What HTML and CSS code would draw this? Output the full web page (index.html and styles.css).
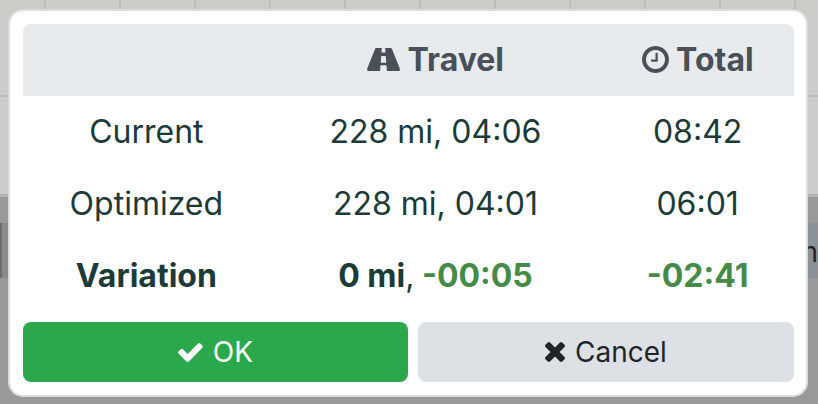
FILE: index.html
```html
<!DOCTYPE html>
<html lang="en">
  <head>
    <meta charset="UTF-8" />
    <meta name="viewport" content="width=device-width, initial-scale=1.0" />
    <title>Optimize route</title>
    <link rel="stylesheet" href="styles.css">
  </head>
  <body>
    <div class="backdrop">
      <div class="map"></div>
      <div class="toolbar">
        <div class="toolbar__left"></div>
        <div class="toolbar__right">m</div>
      </div>
    </div>

    <div class="modal" role="dialog" aria-label="Optimize route">
      <table class="summary">
        <colgroup>
          <col class="col-label">
          <col class="col-travel">
          <col class="col-total">
        </colgroup>
        <thead>
          <tr>
            <td></td>
            <th scope="col">
              <svg class="icon icon--road" viewBox="50 265 1820 1280" aria-hidden="true"><path d="M1111 1062v-4l-24-320q-1-13-11-22.5t-23-9.5h-186q-13 0-23 9.5t-11 22.5l-24 320v4q-1 12 8 20t21 8h244q12 0 21-8t8-20zm759 410q0 73-46 73h-704q13 0 22-9.5t8-22.5l-20-256q-1-13-11-22.5t-23-9.5h-272q-13 0-23 9.5t-11 22.5l-20 256q-1 13 8 22.5t22 9.5h-704q-46 0-46-73 0-54 26-116l417-1044q8-19 26-33t38-14h339q-13 0-23 9.5t-11 22.5l-15 192q-1 14 8 23t22 9h166q13 0 22-9t8-23l-15-192q-1-13-11-22.5t-23-9.5h339q20 0 38 14t26 33l417 1044q26 62 26 116z"/></svg>
              Travel
            </th>
            <th scope="col">
              <svg class="icon icon--clock" viewBox="128 128 1536 1536" aria-hidden="true"><path d="M1024 544v448q0 14-9 23t-23 9h-320q-14 0-23-9t-9-23v-64q0-14 9-23t23-9h224v-352q0-14 9-23t23-9h64q14 0 23 9t9 23zm416 352q0-148-73-273t-198-198-273-73-273 73-198 198-73 273 73 273 198 198 273 73 273-73 198-198 73-273zm224 0q0 209-103 385.5t-279.5 279.5-385.5 103-385.5-103-279.5-279.5-103-385.5 103-385.5 279.5-279.5 385.5-103 385.5 103 279.5 279.5 103 385.5z"/></svg>
              Total
            </th>
          </tr>
        </thead>
        <tbody>
          <tr>
            <td>Current</td>
            <td>228 mi, 04:06</td>
            <td>08:42</td>
          </tr>
          <tr>
            <td>Optimized</td>
            <td>228 mi, 04:01</td>
            <td>06:01</td>
          </tr>
          <tr class="variation">
            <td>Variation</td>
            <td>0 mi<span class="comma">,</span> <span class="better">-00:05</span></td>
            <td><span class="better">-02:41</span></td>
          </tr>
        </tbody>
      </table>
      <div class="actions">
        <button type="button" class="btn btn--ok">
          <svg class="icon icon--check" viewBox="121 270 1550 1252" aria-hidden="true"><path d="M1671 566q0 40-28 68l-724 724-136 136q-28 28-68 28t-68-28l-136-136-362-362q-28-28-28-68t28-68l136-136q28-28 68-28t68 28l294 295 656-657q28-28 68-28t68 28l136 136q28 28 28 68z"/></svg>
          OK
        </button>
        <button type="button" class="btn btn--cancel">
          <svg class="icon icon--times" viewBox="302 366 1188 1188" aria-hidden="true"><path d="M1490 1322q0 40-28 68l-136 136q-28 28-68 28t-68-28l-294-294-294 294q-28 28-68 28t-68-28l-136-136q-28-28-28-68t28-68l294-294-294-294q-28-28-28-68t28-68l136-136q28-28 68-28t68 28l294 294 294-294q28-28 68-28t68 28l136 136q28 28 28 68t-28 68l-294 294 294 294q28 28 28 68z"/></svg>
          Cancel
        </button>
      </div>
    </div>
  </body>
</html>
```

FILE: styles.css
```css
* {
  box-sizing: border-box;
}

body {
  margin: 0;
  background: #999;
  font-family: Inter, "Liberation Sans", sans-serif;
  font-size: 32px;
  line-height: 48px;
  color: #1b3a38;
}

/* Dimmed page behind the dialog */
.backdrop {
  position: absolute;
  inset: 0;
  overflow: hidden;
}
.map {
  height: 197px;
  border-bottom: 3px solid #b2b2b0;
  background-color: #cbccc7;
  background-image:
    linear-gradient(#bbbcbd, #bbbcbd),
    repeating-linear-gradient(90deg, transparent 0 44px, #bbbcbd 44px 46px, transparent 46px 75px);
  background-size: 100% 2px, auto;
  background-position: 0 95px, 0 0;
  background-repeat: no-repeat, repeat;
}
.toolbar {
  display: flex;
  justify-content: space-between;
  height: 55px;
  margin-top: 26px;
  font-size: 28px;
  line-height: 58px;
}
.toolbar__left {
  width: 50%;
  border-left: 2px solid #6d6d6d;
  background: #8b8b8b;
}
.toolbar__right {
  width: 40px;
  background: #8b9196;
  color: #212529;
  text-align: right;
}

.modal {
  position: relative;
  margin: 9px 10px 7px 8px;
  padding: 13px 12px 13px 13px;
  border: 2px solid #dcdcdc;
  border-radius: 15px;
  background: #fff;
}

.summary {
  width: 100%;
  table-layout: fixed;
  border-collapse: separate;
  border-spacing: 0;
  text-align: center;
}
.col-label {
  width: 32%;
}
.col-travel {
  width: 43%;
}
.col-total {
  width: 25%;
}
.summary th,
.summary td {
  padding: 12px 0;
}
.summary thead {
  color: #495057;
}
.summary thead td,
.summary thead th {
  background: #e7ebee;
}
.summary thead td {
  border-top-left-radius: 8px;
}
.summary thead th:last-child {
  border-top-right-radius: 8px;
}
.variation {
  font-weight: 700;
}
.comma {
  font-weight: 400;
}
.better {
  color: #458a47;
}

.actions {
  display: grid;
  grid-template-columns: 385fr 376fr;
  gap: 10px;
  margin-top: 10px;
}
.btn {
  height: 60px;
  padding: 0 16px;
  border: 0;
  border-radius: 8px;
  font: inherit;
  font-size: 28px;
  cursor: pointer;
}
.btn--ok {
  background: #2ca84c;
  color: #fff;
}
.btn--cancel {
  background: #dde1e6;
  color: #212529;
}
.btn .icon {
  margin-right: 2px;
}

.icon {
  fill: currentColor;
}
.icon--road {
  width: 33px;
  height: 23px;
}
.icon--clock {
  width: 27px;
  height: 27px;
  vertical-align: -2px;
}
.icon--check {
  width: 25px;
  height: 20px;
}
.icon--times {
  width: 20px;
  height: 20px;
}
```
